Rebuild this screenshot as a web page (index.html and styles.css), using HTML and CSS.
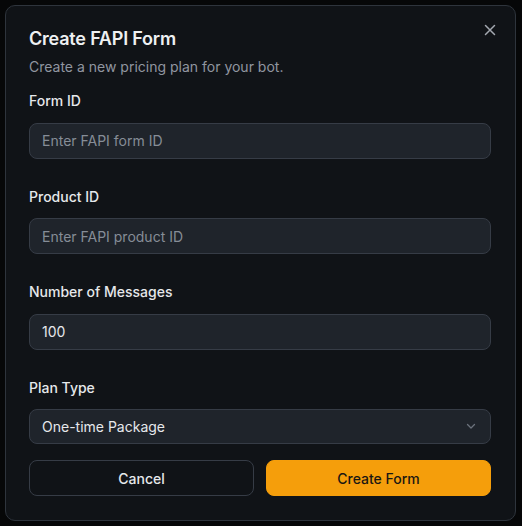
FILE: index.html
```html
<!DOCTYPE html>
<html lang="en">
<head>
<meta charset="utf-8">
<title>Create FAPI Form</title>
<link rel="stylesheet" href="styles.css">
</head>
<body>
<div class="backdrop">
  <div class="dialog">
    <button class="close" aria-label="Close">
      <svg width="12" height="12" viewBox="0 0 12 12" fill="none" stroke="currentColor" stroke-width="1.5" stroke-linecap="round"><path d="M1.5 1.5l9 9M10.5 1.5l-9 9"/></svg>
    </button>
    <div class="header">
      <h2 class="title">Create FAPI Form</h2>
      <p class="desc">Create a new pricing plan for your bot.</p>
    </div>
    <div class="form">
      <div class="field">
        <label class="label">Form ID</label>
        <div class="input placeholder">Enter FAPI form ID</div>
      </div>
      <div class="field">
        <label class="label">Product ID</label>
        <div class="input placeholder">Enter FAPI product ID</div>
      </div>
      <div class="field">
        <label class="label">Number of Messages</label>
        <div class="input">100</div>
      </div>
      <div class="field last">
        <label class="label">Plan Type</label>
        <div class="input select">
          <span>One-time Package</span>
          <svg class="chev" width="12" height="12" viewBox="0 0 12 12" fill="none" stroke="currentColor" stroke-width="1.3" stroke-linecap="round" stroke-linejoin="round"><path d="M2.5 4.5L6 8l3.5-3.5"/></svg>
        </div>
      </div>
      <div class="actions">
        <button class="btn btn-outline">Cancel</button>
        <button class="btn btn-primary">Create Form</button>
      </div>
    </div>
  </div>
</div>
</body>
</html>
```
FILE: styles.css
```css
* { box-sizing: border-box; }
html, body { margin: 0; padding: 0; }
body {
  background: #060708;
  font-family: Inter, "Noto Sans", sans-serif;
  width: 522px;
  height: 526px;
  overflow: hidden;
}
.backdrop {
  width: 522px;
  height: 526px;
  display: flex;
  align-items: flex-start;
  justify-content: flex-start;
  padding: 5px 0 0 5px;
}
.dialog {
  position: relative;
  width: 511px;
  height: 516px;
  background: #101317;
  border: 1px solid #2e343c;
  border-radius: 10px;
  padding: 23px 24px 24px 23px;
  display: flex;
  flex-direction: column;
}
.close {
  position: absolute;
  top: 18px;
  right: 19px;
  background: none;
  border: none;
  padding: 0;
  color: #a3a8b0;
  width: 12px;
  height: 12px;
  display: flex;
}
.header { display: flex; flex-direction: column; gap: 8px; }
.title {
  margin: 0;
  font-size: 18px;
  line-height: 20px;
  font-weight: 600;
  color: #eef0f2;
  letter-spacing: -0.2px;
}
.desc {
  margin: 0;
  font-size: 14px;
  line-height: 20px;
  color: #9096a0;
}
.form { display: flex; flex-direction: column; margin-top: 14px; }
.field { display: flex; flex-direction: column; gap: 11.5px; margin-bottom: 28px; }
.field.last { margin-bottom: 16.5px; gap: 11px; }
.label {
  font-size: 14px;
  line-height: 20px;
  font-weight: 500;
  color: #e6e8eb;
}
.input {
  height: 36px;
  background: #1f242b;
  border: 1px solid #363c46;
  border-radius: 8px;
  padding: 0 12px;
  display: flex;
  align-items: center;
  font-size: 14px;
  color: #e6e8eb;
}
.placeholder { color: #868d97; }
.select { justify-content: space-between; height: 35px; }
.chev { color: #6b727c; margin-right: 1px; }
.actions { display: flex; gap: 12px; }
.btn {
  flex: 1;
  height: 36px;
  border-radius: 8px;
  font-family: inherit;
  font-size: 14px;
  font-weight: 500;
}
.btn-outline {
  background: transparent;
  border: 1px solid #363c46;
  color: #e6e8eb;
}
.btn-primary {
  background: #f59e0b;
  border: 1px solid #f59e0b;
  color: #1a1712;
}
```
